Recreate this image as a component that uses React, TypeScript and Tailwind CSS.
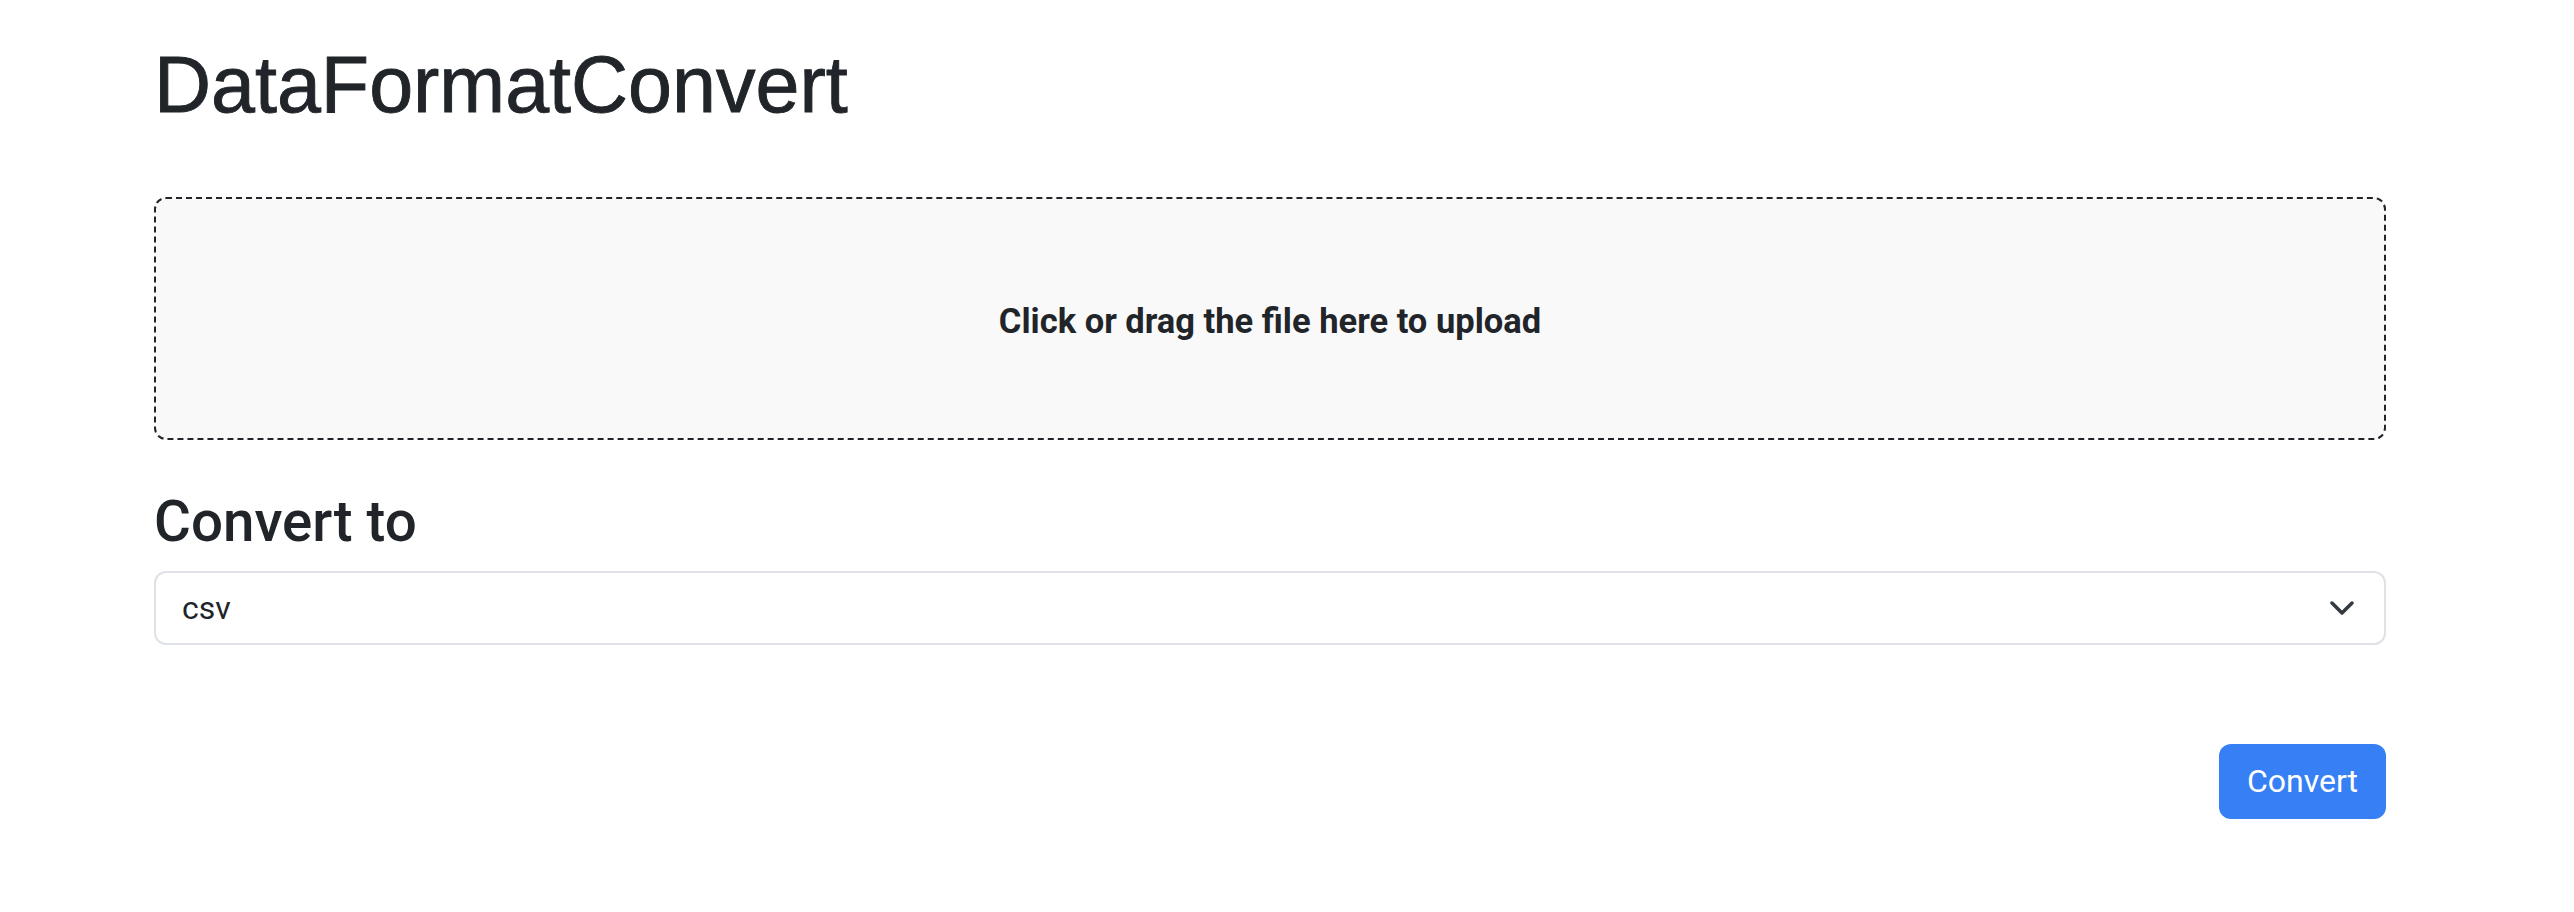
import React from "react";

export default function App() {
  return (
    <div className="min-h-screen bg-white text-[#212529] [font-family:Roboto,'Noto_Sans',sans-serif]">
      <div className="ml-[154px] w-[2232px] pt-[38px]">
        <h1 className="text-[79px] leading-[1.2] font-normal [font-family:'Liberation_Sans',Arial,sans-serif] [-webkit-text-stroke:0.9px_#212529]">
          DataFormatConvert
        </h1>
        <div className="mt-[64px] flex h-[243px] items-center justify-center rounded-[12px] border-2 border-dashed border-[#212529] bg-[#f9f9f9] pt-[8px]">
          <span className="text-[34.5px] font-bold">
            Click or drag the file here to upload
          </span>
        </div>
        <h3 className="mt-[49px] text-[56.5px] leading-[1.2] font-medium">
          Convert to
        </h3>
        <div className="mt-[14px] flex h-[74px] items-center justify-between rounded-[12px] border-2 border-[#dee2e6] bg-white pl-[26px] pr-[30px] text-[32px]">
          <span>csv</span>
          <svg width="24" height="14" viewBox="0 0 24 14" fill="none">
            <path d="M2 2l10 10L22 2" stroke="#343a40" strokeWidth="3.5" strokeLinecap="round" strokeLinejoin="round" />
          </svg>
        </div>
        <div className="mt-[99px] flex justify-end">
          <button className="flex h-[75px] w-[167px] items-center justify-center rounded-[12px] bg-[#377ff5] text-[32px] text-white">
            Convert
          </button>
        </div>
      </div>
    </div>
  );
}
